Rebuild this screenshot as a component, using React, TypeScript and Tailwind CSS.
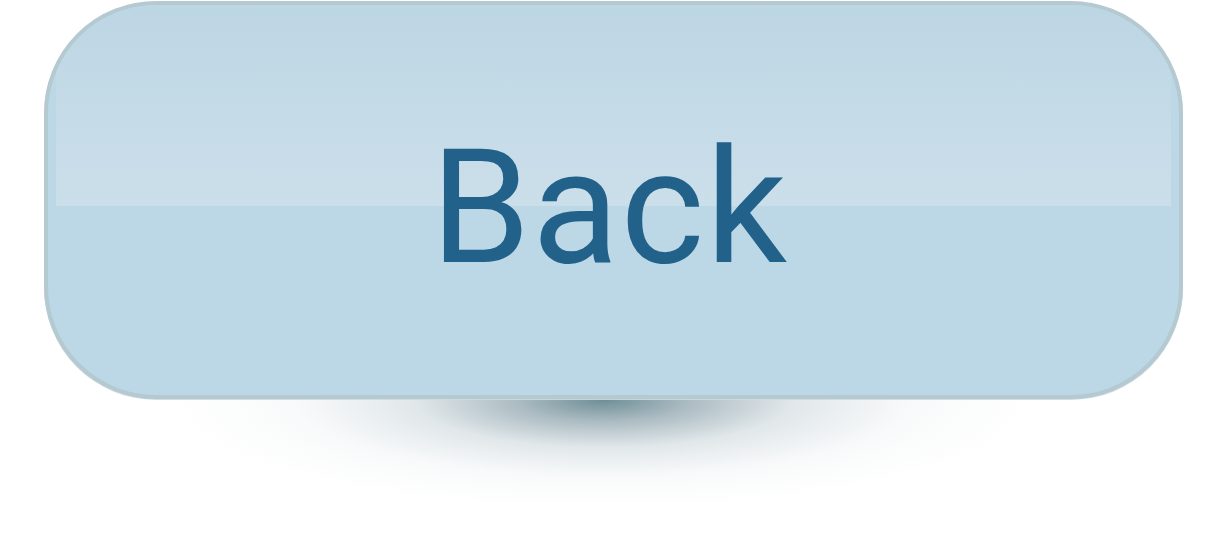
export default function App() {
  return (
    <div className="relative w-[1205px] h-[538px] bg-white overflow-hidden">
      {/* drop shadow under the button */}
      <div className="absolute left-[108px] top-[276px] w-[990px] h-[248px] bg-[radial-gradient(ellipse_50%_50%_at_50%_50%,rgba(95,130,140,0.9)_0%,rgba(125,150,160,0.65)_17%,rgba(175,192,199,0.38)_38%,rgba(218,226,229,0.18)_62%,rgba(245,247,248,0.06)_85%,rgba(255,255,255,0)_100%)]" />
      <div className="relative ml-[44px] mt-[1px] w-[1139px] h-[398px] rounded-[112px] border-4 border-[#b5c9d1] bg-[#bcd7e5] overflow-hidden shadow-[0_1px_0_rgba(205,218,224,0.9)]">
        <div className="absolute left-[8px] right-[8px] top-0 h-[201px] bg-gradient-to-b from-[#bdd6e4] to-[#cbdfea]" />
        <div className="relative h-full flex items-center justify-center pt-[16px] pr-[8px]">
          <span
            className="text-[160px] leading-none tracking-[1.5px] text-[#22628a]"
            style={{ fontFamily: "Roboto, 'Liberation Sans', sans-serif" }}
          >
            Back
          </span>
        </div>
      </div>
    </div>
  );
}
